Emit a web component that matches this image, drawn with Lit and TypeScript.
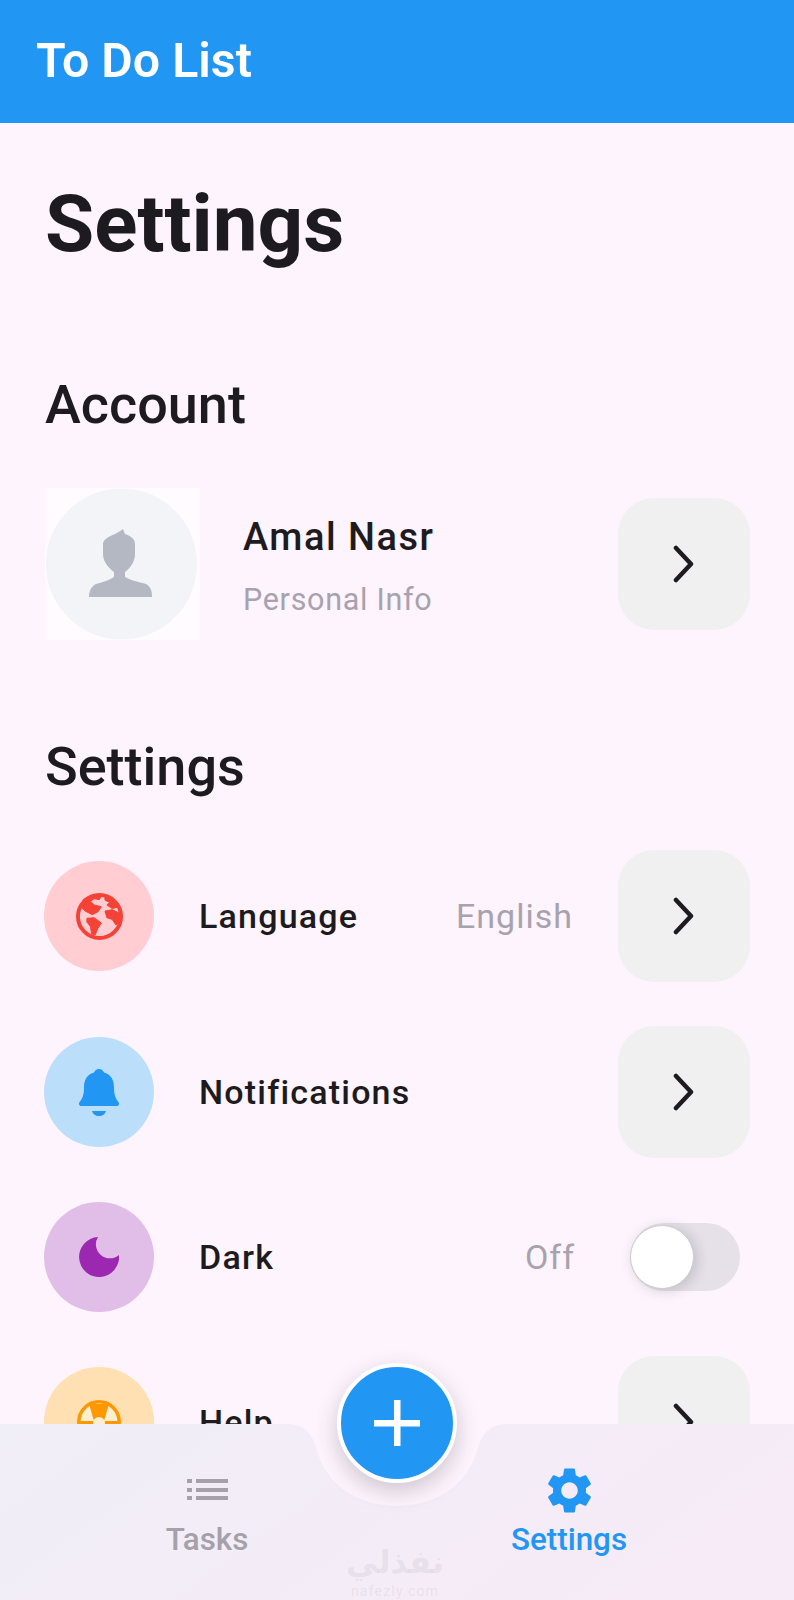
import { LitElement, html, css, svg } from 'lit';
import { customElement } from 'lit/decorators.js';

const chevron = html`<svg class="chev" viewBox="0 0 24 38"><path d="M4 3l15 16L4 35" /></svg>`;

const icons = {
  globe: svg`<circle cx="24" cy="24" r="22" fill="none" stroke="currentColor" stroke-width="4"/>
    <g stroke="currentColor" stroke-width="1" stroke-linejoin="round">
      <path d="M7.400 6.700L16.600 2.200L25.900 2.200L24 6.700L18.500 5.900L14.800 8.500L18.500 12.200L25.900 14L22.200 19.500L16.600 22.100L9.200 18.400L4.800 14Z"/>
      <path d="M11.100 25.900L18.500 25.200L25.900 30.700L22.200 36.300L19.600 42.900L15.900 41.800L14.800 34.400L11.100 29.600Z"/>
      <path d="M29.600 3.700L37 5.900L44.400 14L37 15.900L31.500 12.200L34.500 9.600L29.600 7.400Z"/>
      <path d="M29.600 18.500L37 17L46.200 21.500L46.200 29L40.700 32.600L37 27L31.500 25.200Z"/>
    </g>`,
  bell: svg`<path d="M20 0c2.600 0 4.200 1.700 5 3.600C32.600 5.600 35 12 35 19c0 6.500 1.500 10.500 4.400 14 1.400 1.800.4 4-1.900 4H2.500C.2 37-.8 34.800.6 33 3.500 29.500 5 25.500 5 19 5 12 7.400 5.600 15 3.600 15.800 1.700 17.400 0 20 0z"/>
    <path d="M13 42h14c-.800 3-3.600 5-7 5s-6.200-2-7-5z"/>`,
  moon: svg`<path d="M19 0A20 20 0 1 0 40 18A14 14 0 0 1 19 0z"/>`,
  help: svg`<circle cx="22" cy="22" r="20.200" fill="#ffefd2" stroke="currentColor" stroke-width="3.500"/>
    <path d="M12 4h20l-5 17h-10z"/>
    <path d="M2 21h40v3H2z"/>
    <circle cx="22" cy="23" r="6" fill="#ffefd2"/>`,
};

const settingsRows = [
  { label: 'Language', icon: icons.globe, box: '0 0 48 48', w: 47, h: 47, tone: 'red', value: 'English' },
  { label: 'Notifications', icon: icons.bell, box: '0 0 40 47', w: 40, h: 47, tone: 'blue' },
  { label: 'Dark', icon: icons.moon, box: '0 0 40 40', w: 40, h: 40, tone: 'purple', value: 'Off', toggle: true },
  { label: 'Help', icon: icons.help, box: '0 0 44 44', w: 44, h: 44, tone: 'orange' },
];

@customElement('app-root')
export class AppRoot extends LitElement {
  static styles = css`
    :host {
      display: block;
      position: relative;
      width: 794px;
      height: 1600px;
      overflow: hidden;
      background: #fdf4fd;
      font-family: Roboto, 'Liberation Sans', sans-serif;
      color: #1d1b20;
    }

    .appbar {
      height: 123px;
      padding-left: 36px;
      background: #2196f3;
      color: #fff;
      font-size: 48.300px;
      font-weight: 600;
      line-height: 121px;
    }

    main {
      padding: 0 44px;
    }

    h1 {
      margin: 0;
      padding-top: 51px;
      padding-left: 1px;
      font-size: 80px;
      font-weight: 700;
      line-height: 100px;
    }

    h2 {
      margin: 0;
      padding-left: 1px;
      font-size: 54px;
      font-weight: 500;
      line-height: 60px;
    }

    .account-title { margin-top: 101px; }
    .settings-title { margin-top: 97px; margin-bottom: 53px; }

    .account {
      display: flex;
      align-items: center;
      margin-top: 53px;
      height: 152px;
    }

    .avatar {
      flex: none;
      display: flex;
      align-items: center;
      justify-content: center;
      width: 155px;
      height: 152px;
      margin-left: 1px;
      background: radial-gradient(circle at 76.500px 50%, #f3f4f7 75px, #fffbfe 76px);
    }

    .avatar svg { margin-left: -5px; }

    .who {
      flex: 1;
      margin-left: 43px;
      padding-top: 5px;
    }

    .name {
      font-size: 38px;
      font-weight: 500;
      letter-spacing: 1.500px;
      line-height: 44px;
    }

    .sub {
      margin-top: 23px;
      font-size: 30.500px;
      letter-spacing: 0.700px;
      line-height: 36px;
      color: #a7a2ad;
    }

    .tile {
      flex: none;
      display: flex;
      align-items: center;
      justify-content: center;
      width: 132px;
      height: 132px;
      border-radius: 36px;
      background: #f0f0f1;
    }

    .chev {
      width: 24px;
      height: 38px;
      fill: none;
      stroke: #1d1b20;
      stroke-width: 4.500;
      stroke-linecap: round;
      stroke-linejoin: round;
    }

    .rows {
      display: flex;
      flex-direction: column;
      gap: 44px;
    }

    .row {
      display: flex;
      align-items: center;
    }

    .dot {
      flex: none;
      display: flex;
      align-items: center;
      justify-content: center;
      width: 110px;
      height: 110px;
      border-radius: 50%;
    }

    .dot svg { fill: currentColor; display: block; }

    .red { background: #ffcdd2; color: #f44336; }
    .blue { background: #bbdefb; color: #2196f3; }
    .purple { background: #e1bee7; color: #9c27b0; }
    .orange { background: #ffe0b2; color: #ff9800; }

    .label {
      flex: 1;
      margin-left: 45px;
      font-size: 34px;
      font-weight: 500;
      letter-spacing: 1.200px;
    }

    .value {
      font-size: 34px;
      letter-spacing: 1px;
      color: #a7a2ad;
      margin-right: 45px;
    }

    .value.off { margin-right: 55px; }

    .toggle {
      position: relative;
      flex: none;
      width: 110px;
      height: 68px;
      margin-right: 10px;
      border-radius: 34px;
      background: #e6e1e9;
    }

    .thumb {
      position: absolute;
      left: 0;
      top: 2px;
      width: 64px;
      height: 64px;
      box-sizing: border-box;
      border-radius: 50%;
      background: #fff;
      border: 1px solid #cfcbd2;
      box-shadow: 3px 2px 14px rgba(0, 0, 0, 0.16);
    }

    .nav {
      position: absolute;
      left: 0;
      right: 0;
      bottom: 0;
      height: 176px;
      display: grid;
      grid-template-columns: 362px 362px;
      padding-left: 26px;
    }

    .nav-bg {
      position: absolute;
      left: 0;
      top: 0;
      width: 794px;
      height: 176px;
    }

    .item {
      position: relative;
      display: flex;
      flex-direction: column;
      align-items: center;
      height: 176px;
      font-size: 31.400px;
      font-weight: 500;
      color: #a5a0aa;
    }

    .item.on { color: #2196f3; }

    .item svg { display: block; fill: currentColor; }

    .item .list { margin-top: 54px; margin-bottom: 20px; }
    .item .gear { margin-top: 39px; margin-bottom: 3px; }

    .fab {
      position: absolute;
      left: 337px;
      top: 1363px;
      width: 120px;
      height: 120px;
      box-sizing: border-box;
      display: flex;
      align-items: center;
      justify-content: center;
      border-radius: 50%;
      border: 4px solid #fff;
      background: #2196f3;
      box-shadow: 0 8px 22px rgba(60, 50, 70, 0.24);
    }

    .mark {
      position: absolute;
      left: 345px;
      top: 1541px;
      width: 100px;
      text-align: center;
      color: rgba(120, 110, 125, 0.11);
    }

    .mark .ar {
      font-family: 'DejaVu Sans', sans-serif;
      font-size: 32px;
      font-weight: 700;
      line-height: 42px;
    }

    .mark .en {
      font-size: 14px;
      letter-spacing: 1.200px;
      line-height: 16px;
    }
  `;

  render() {
    return html`
      <header class="appbar">To Do List</header>
      <main>
        <h1>Settings</h1>
        <h2 class="account-title">Account</h2>
        <div class="account">
          <div class="avatar">
            <svg width="80" height="80" viewBox="0 0 80 80" fill="#b4b8c2">
              <path d="M43 5L45 10C51 12 55 15 55 20V30C55 38 50 44 45 48L45 53C52 57 60 58 66 60C70 62 72 66 72 73H9C9 66 12 62 16 60C22 58 28 57 34 53L34 48C29 44 23 38 23 30V20C23 15 30 12 35 10C38 8 41 7 43 5Z" />
            </svg>
          </div>
          <div class="who">
            <div class="name">Amal Nasr</div>
            <div class="sub">Personal Info</div>
          </div>
          <div class="tile">${chevron}</div>
        </div>
        <h2 class="settings-title">Settings</h2>
        <div class="rows">
          ${settingsRows.map(
            (r) => html`
              <div class="row">
                <div class="dot ${r.tone}">
                  <svg width=${r.w} height=${r.h} viewBox=${r.box}>${r.icon}</svg>
                </div>
                <div class="label">${r.label}</div>
                ${r.value ? html`<div class="value ${r.toggle ? 'off' : ''}">${r.value}</div>` : ''}
                ${r.toggle
                  ? html`<div class="toggle"><div class="thumb"></div></div>`
                  : html`<div class="tile">${chevron}</div>`}
              </div>
            `,
          )}
        </div>
      </main>

      <nav class="nav">
        <svg class="nav-bg" viewBox="0 0 794 176">
          <defs>
            <linearGradient id="bar" x1="0" x2="1" y1="0" y2="0.3">
              <stop offset="0" stop-color="#f0eef7" />
              <stop offset="1" stop-color="#f6ebf7" />
            </linearGradient>
          </defs>
          <path
            d="M0 0H288Q310 0 317 26C326 62 360 82 397 82C434 82 468 62 477 26Q484 0 506 0H794V176H0Z"
            fill="url(#bar)"
          />
        </svg>
        <div class="item">
          <svg class="list" width="41" height="23" viewBox="0 0 41 23">
            <rect x="0" y="1" width="5" height="4" />
            <rect x="0" y="10" width="5" height="4" />
            <rect x="0" y="18" width="5" height="4" />
            <rect x="9" y="1" width="32" height="4" />
            <rect x="9" y="10" width="32" height="4" />
            <rect x="9" y="18" width="32" height="4" />
          </svg>
          <span>Tasks</span>
        </div>
        <div class="item on">
          <svg class="gear" width="55" height="55" viewBox="0 0 24 24">
            <path
              d="M19.140 12.940c.04-.3.06-.61.06-.94 0-.32-.02-.64-.07-.94l2.030-1.580c.18-.14.23-.41.12-.61l-1.920-3.320c-.12-.22-.37-.29-.59-.22l-2.390.96c-.5-.38-1.030-.7-1.620-.94l-.36-2.540c-.04-.24-.24-.41-.48-.41h-3.840c-.24 0-.43.17-.47.41l-.36 2.540c-.59.24-1.130.57-1.620.94l-2.390-.96c-.22-.08-.47 0-.59.22L2.740 8.870c-.12.21-.08.47.12.61l2.030 1.580c-.05.3-.09.63-.09.94s.02.64.07.94l-2.030 1.580c-.18.14-.23.41-.12.61l1.920 3.320c.12.22.37.29.59.22l2.390-.96c.5.38 1.030.7 1.620.94l.36 2.540c.05.24.24.41.48.41h3.840c.24 0 .44-.17.47-.41l.36-2.540c.59-.24 1.130-.56 1.620-.94l2.390.96c.22.08.47 0 .59-.22l1.920-3.320c.12-.22.07-.47-.12-.61l-2.010-1.580zM12 15.600c-1.980 0-3.600-1.620-3.600-3.600s1.620-3.600 3.600-3.600 3.600 1.620 3.600 3.600-1.620 3.600-3.600 3.600z"
            />
          </svg>
          <span>Settings</span>
        </div>
      </nav>

      <div class="fab">
        <svg width="46" height="46" viewBox="0 0 46 46" fill="#fff">
          <rect x="20" y="0" width="6.500" height="46" />
          <rect x="0" y="20" width="46" height="6.500" />
        </svg>
      </div>

      <div class="mark">
        <div class="ar">نفذلي</div>
        <div class="en">nafezly.com</div>
      </div>
    `;
  }
}

declare global {
  interface HTMLElementTagNameMap {
    'app-root': AppRoot;
  }
}
